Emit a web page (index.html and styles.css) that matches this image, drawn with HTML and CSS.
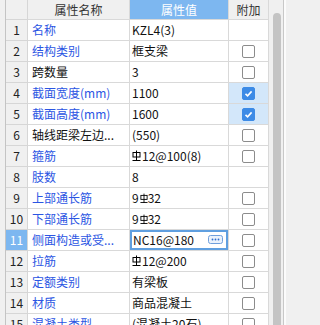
FILE: index.html
```html
<!DOCTYPE html>
<html>
<head>
<meta charset="utf-8">
<link rel="stylesheet" href="styles.css">
</head>
<body>
<div class="frame">
  <div class="edge"></div>
  <div class="grid">
    <div class="row head">
      <div class="c num"></div>
      <div class="c name hcell">属性名称</div>
      <div class="c val hsel">属性值</div>
      <div class="c add hcell">附加</div>
    </div>
    <div class="row"><div class="c num">1</div><div class="c name blue">名称</div><div class="c val">KZL4(3)</div><div class="c add"></div></div>
    <div class="row"><div class="c num">2</div><div class="c name blue">结构类别</div><div class="c val">框支梁</div><div class="c add"><span class="cb"></span></div></div>
    <div class="row"><div class="c num">3</div><div class="c name">跨数量</div><div class="c val">3</div><div class="c add"><span class="cb"></span></div></div>
    <div class="row"><div class="c num">4</div><div class="c name blue">截面宽度(mm)</div><div class="c val">1100</div><div class="c add on"><span class="cb checked"><svg viewBox="0 0 13 13" width="13" height="13"><path d="M3.5 6.8 L5.6 8.8 L9.6 4.4" fill="none" stroke="#fff" stroke-width="1.6"/></svg></span></div></div>
    <div class="row"><div class="c num">5</div><div class="c name blue">截面高度(mm)</div><div class="c val">1600</div><div class="c add on"><span class="cb checked"><svg viewBox="0 0 13 13" width="13" height="13"><path d="M3.5 6.8 L5.6 8.8 L9.6 4.4" fill="none" stroke="#fff" stroke-width="1.6"/></svg></span></div></div>
    <div class="row"><div class="c num">6</div><div class="c name">轴线距梁左边...</div><div class="c val">(550)</div><div class="c add"><span class="cb"></span></div></div>
    <div class="row"><div class="c num">7</div><div class="c name blue">箍筋</div><div class="c val"><svg class="steel" viewBox="0 0 9 12" width="9" height="12"><rect x="1" y="2.5" width="7" height="4.5" fill="none" stroke="#000" stroke-width="1"/><path d="M4.5 0.5 V11 M0.5 10.5 H8.5" stroke="#000" stroke-width="1" fill="none"/></svg>12@100(8)</div><div class="c add"><span class="cb"></span></div></div>
    <div class="row"><div class="c num">8</div><div class="c name blue">肢数</div><div class="c val">8</div><div class="c add"></div></div>
    <div class="row"><div class="c num">9</div><div class="c name blue">上部通长筋</div><div class="c val">9<svg class="steel sm" viewBox="0 0 9 12" width="8" height="11"><rect x="1" y="2.5" width="7" height="4.5" fill="none" stroke="#000" stroke-width="1"/><path d="M4.5 0.5 V11 M0.5 10.5 H8.5" stroke="#000" stroke-width="1" fill="none"/></svg>32</div><div class="c add"><span class="cb"></span></div></div>
    <div class="row"><div class="c num">10</div><div class="c name blue">下部通长筋</div><div class="c val">9<svg class="steel sm" viewBox="0 0 9 12" width="8" height="11"><rect x="1" y="2.5" width="7" height="4.5" fill="none" stroke="#000" stroke-width="1"/><path d="M4.5 0.5 V11 M0.5 10.5 H8.5" stroke="#000" stroke-width="1" fill="none"/></svg>32</div><div class="c add"><span class="cb"></span></div></div>
    <div class="row"><div class="c num sel">11</div><div class="c name blue">侧面构造或受...</div><div class="c val edit"><span class="etext">NC16@180</span><svg class="more" viewBox="0 0 15 9" width="15" height="9"><rect x="0.5" y="0.5" width="14" height="8" rx="2" fill="#eaf2fc" stroke="#6f9fdc"/><circle cx="4.5" cy="4.5" r="0.9" fill="#2f6fcf"/><circle cx="7.5" cy="4.5" r="0.9" fill="#2f6fcf"/><circle cx="10.5" cy="4.5" r="0.9" fill="#2f6fcf"/></svg></div><div class="c add"><span class="cb"></span></div></div>
    <div class="row"><div class="c num">12</div><div class="c name blue">拉筋</div><div class="c val"><svg class="steel" viewBox="0 0 9 12" width="9" height="12"><rect x="1" y="2.5" width="7" height="4.5" fill="none" stroke="#000" stroke-width="1"/><path d="M4.5 0.5 V11 M0.5 10.5 H8.5" stroke="#000" stroke-width="1" fill="none"/></svg>12@200</div><div class="c add"><span class="cb"></span></div></div>
    <div class="row"><div class="c num">13</div><div class="c name blue">定额类别</div><div class="c val">有梁板</div><div class="c add"><span class="cb"></span></div></div>
    <div class="row"><div class="c num">14</div><div class="c name blue">材质</div><div class="c val">商品混凝土</div><div class="c add"><span class="cb"></span></div></div>
    <div class="row"><div class="c num">15</div><div class="c name blue">混凝土类型</div><div class="c val">(混凝土20石)</div><div class="c add"><span class="cb"></span></div></div>
  </div>
  <div class="scroll"><div class="thumb"></div></div>
  <div class="rim"></div>
</div>
</body>
</html>
```

FILE: styles.css
```css
html, body {
  margin: 0;
  padding: 0;
  background: #f0f0f0;
  overflow: hidden;
}
body {
  width: 286px;
  height: 325px;
  font-family: "Noto Sans CJK SC", "Noto Sans", sans-serif;
  font-size: 12px;
  color: #111;
}
.frame {
  display: flex;
  height: 325px;
}
.edge {
  width: 5px;
  background: #f0f0f0;
  border-right: 1px solid #c4c4c4;
}
.grid {
  display: flex;
  flex-direction: column;
  background: #fff;
}
.row {
  display: grid;
  grid-template-columns: 22px 102px 99px 40px;
  height: 21px;
  flex: none;
}
.row.head {
  height: 20px;
}
.c {
  border-right: 1px solid #d9d9d9;
  border-bottom: 1px solid #d9d9d9;
  display: flex;
  align-items: center;
  white-space: nowrap;
  overflow: hidden;
  line-height: 1;
}
.num {
  background: #f0f0f0;
  justify-content: center;
  color: #222;
  border-color: #d6d6d6;
}
.num.sel {
  background: #7db7f0;
  color: #fff;
}
.name {
  padding-left: 4px;
}
.blue {
  color: #2b55e3;
}
.val {
  padding-left: 2px;
}
.hcell {
  background: #f0f0f0;
  justify-content: center;
  color: #333;
  padding-left: 0;
}
.hsel {
  background: #7db7f0;
  color: #fff;
  justify-content: center;
  padding-left: 0;
}
.add {
  justify-content: center;
}
.add.on {
  background: #d3e7fa;
}
.cb {
  width: 11px;
  height: 11px;
  border: 1px solid #8c8c8c;
  border-radius: 2px;
  background: #fff;
  display: block;
  position: relative;
}
.cb.checked {
  background: #3d8be6;
  border-color: #3d8be6;
}
.cb svg {
  position: absolute;
  left: -1px;
  top: -1px;
}
.steel {
  margin-right: 1px;
  flex: none;
}
.steel.sm {
  margin: 0 0 0 1px;
}
.edit {
  box-shadow: inset 0 0 0 2px #5f9fe0;
  padding-left: 3px;
  justify-content: space-between;
  padding-right: 5px;
}
.more {
  flex: none;
  margin-top: -2px;
}
.scroll {
  width: 14px;
  background: #f0f0f0;
  border-right: 1px solid #c8c8c8;
  padding-top: 13px;
  display: flex;
  justify-content: center;
}
.thumb {
  width: 8px;
  height: 400px;
  border-radius: 4px;
  background: #c4c4c4;
  margin-left: 1px;
}
.rim {
  width: 2px;
  background: #fbfbfb;
}
```
